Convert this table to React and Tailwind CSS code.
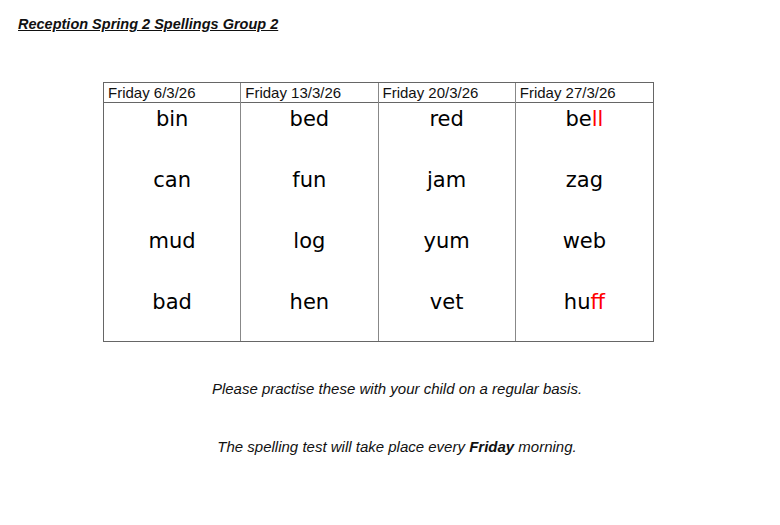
const WEEKS = [
  { date: 'Friday 6/3/26', words: [['bin'], ['can'], ['mud'], ['bad']] },
  { date: 'Friday 13/3/26', words: [['bed'], ['fun'], ['log'], ['hen']] },
  { date: 'Friday 20/3/26', words: [['red'], ['jam'], ['yum'], ['vet']] },
  { date: 'Friday 27/3/26', words: [['be', 'll'], ['zag'], ['web'], ['hu', 'ff']] },
];

const Word = ({ parts }) => (
  <div className="h-[30px] leading-[30px] text-[21px] text-black">
    {parts[0]}
    {parts[1] && <span className="text-[#ff0000]">{parts[1]}</span>}
  </div>
);

export default function App() {
  return (
    <div className="w-[780px] h-[525px] bg-white relative" style={{ fontFamily: '"Liberation Sans", Arial, sans-serif' }}>
      {/* Title */}
      <div className="pt-[14px] pl-[18px] leading-[20px]">
        <span className="text-[14.5px] font-bold italic underline text-[#111]">Reception Spring 2 Spellings Group 2</span>
      </div>

      {/* Table */}
      <div className="ml-[103px] mt-[48px] w-[551px] border border-[#666] grid grid-cols-4">
        {WEEKS.map((w, i) => (
          <div key={w.date} className={`flex flex-col ${i < 3 ? 'border-r border-[#888]' : ''}`}>
            <div className="h-[20px] leading-[20px] pl-[4px] text-[15px] text-[#111] border-b border-[#666]">{w.date}</div>
            <div
              className="flex flex-col items-center gap-[31px] pt-[1px] pb-[24px]"
              style={{ fontFamily: '"Comic Sans MS", "DejaVu Sans", sans-serif' }}
            >
              {w.words.map((p, j) => <Word key={j} parts={p} />)}
            </div>
          </div>
        ))}
      </div>

      {/* Notes */}
      <div className="pl-[14px] mt-[37px] leading-[20px] text-center italic text-[15px] text-[#111]">
        Please practise these with your child on a regular basis.
      </div>
      <div className="pl-[14px] mt-[38px] leading-[20px] text-center italic text-[15px] text-[#111]">
        The spelling test will take place every <span className="font-bold">Friday</span> morning.
      </div>
    </div>
  );
}
